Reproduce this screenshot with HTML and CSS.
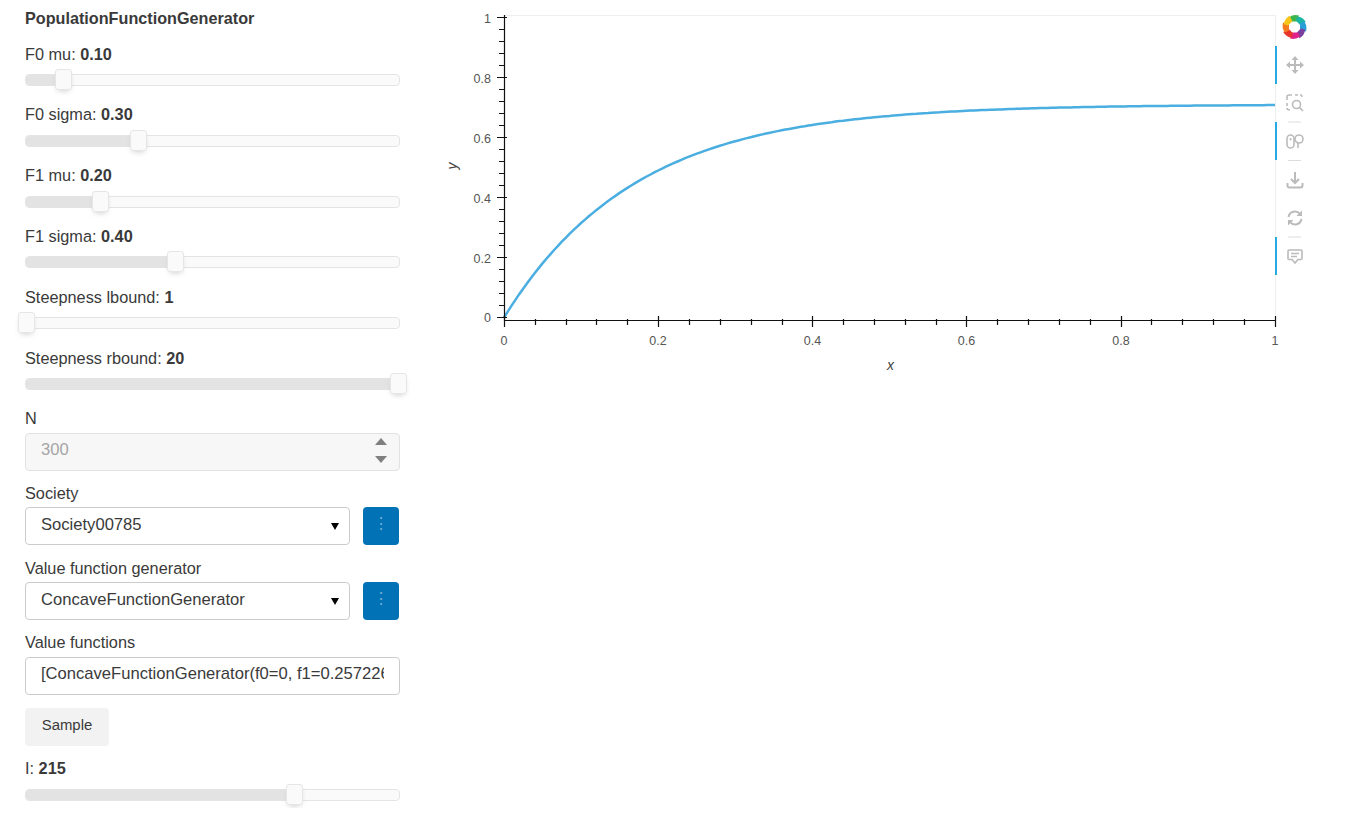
FILE: index.html
```html
<!DOCTYPE html>
<html lang="en">
<head>
    <meta charset="UTF-8">
    <meta name="viewport" content="width=device-width, initial-scale=1.0">
    <title>PopulationFunctionGenerator</title>
    <link rel="stylesheet" href="styles.css">
</head>
<body>
    <div id="container">
        <div id="controls">
            <h1 class="title">PopulationFunctionGenerator</h1>

            <div class="slider">
                <div class="label">F0 mu: <b>0.10</b></div>
                <div class="track" style="--pos: 0.1"><div class="fill"></div><div class="handle"></div></div>
            </div>
            <div class="slider">
                <div class="label">F0 sigma: <b>0.30</b></div>
                <div class="track" style="--pos: 0.3"><div class="fill"></div><div class="handle"></div></div>
            </div>
            <div class="slider">
                <div class="label">F1 mu: <b>0.20</b></div>
                <div class="track" style="--pos: 0.2"><div class="fill"></div><div class="handle"></div></div>
            </div>
            <div class="slider">
                <div class="label">F1 sigma: <b>0.40</b></div>
                <div class="track" style="--pos: 0.4"><div class="fill"></div><div class="handle"></div></div>
            </div>
            <div class="slider">
                <div class="label">Steepness lbound: <b>1</b></div>
                <div class="track" style="--pos: 0"><div class="fill"></div><div class="handle"></div></div>
            </div>
            <div class="slider">
                <div class="label">Steepness rbound: <b>20</b></div>
                <div class="track" style="--pos: 1"><div class="fill"></div><div class="handle"></div></div>
            </div>

            <div class="field">
                <label class="label" for="n">N</label>
                <div class="spinner">
                    <input class="text-input" id="n" type="text" value="300" disabled>
                    <span class="spin-up"></span>
                    <span class="spin-down"></span>
                </div>
            </div>
            <div class="field">
                <label class="label" for="society">Society</label>
                <div class="select-row">
                    <div class="select-box">
                        <select class="text-input" id="society"><option>Society00785</option></select>
                    </div>
                    <button class="menu-button">⋮</button>
                </div>
            </div>
            <div class="field">
                <label class="label" for="generator">Value function generator</label>
                <div class="select-row">
                    <div class="select-box">
                        <select class="text-input" id="generator"><option>ConcaveFunctionGenerator</option></select>
                    </div>
                    <button class="menu-button">⋮</button>
                </div>
            </div>
            <div class="field">
                <label class="label" for="functions">Value functions</label>
                <input class="text-input" id="functions" type="text" value="[ConcaveFunctionGenerator(f0=0, f1=0.2572260000, steepness=4.2)]">
            </div>

            <button class="sample-button">Sample</button>

            <div class="slider last">
                <div class="label">I: <b>215</b></div>
                <div class="track" style="--pos: 0.719"><div class="fill"></div><div class="handle"></div></div>
            </div>
        </div>

        <div id="plot">
            <!-- viewBox uses page coordinates so the numbers read off the screenshot directly -->
            <svg class="chart" viewBox="440 0 880 380" width="880" height="380">
                <path class="frame" d="M504 15.5H1275.5V320"/>

                <path class="tool-active" d="M1276 46V84M1276 122V160M1276 237V275"/>

                <path class="curve" id="curve" d="M504 317.5"/>

                <!-- y axis -->
                <path class="axis" d="M504.5 15V320.5"/>
                <path class="axis" d="M497 17.5H507M497 77.5H507M497 137.5H507M497 197.5H507M497 257.5H507M497 317.5H507"/>
                <path class="axis" d="M499 29.5H504M499 41.5H504M499 53.5H504M499 65.5H504M499 89.5H504M499 101.5H504M499 113.5H504M499 125.5H504M499 149.5H504M499 161.5H504M499 173.5H504M499 185.5H504M499 209.5H504M499 221.5H504M499 233.5H504M499 245.5H504M499 269.5H504M499 281.5H504M499 293.5H504M499 305.5H504"/>
                <text class="tick" x="491" y="22.500" text-anchor="end">1</text>
                <text class="tick" x="491" y="82.500" text-anchor="end">0.8</text>
                <text class="tick" x="491" y="142.500" text-anchor="end">0.6</text>
                <text class="tick" x="491" y="202.500" text-anchor="end">0.4</text>
                <text class="tick" x="491" y="262.500" text-anchor="end">0.2</text>
                <text class="tick" x="491" y="322" text-anchor="end">0</text>
                <text class="axis-label" transform="translate(457 166) rotate(-90)" text-anchor="middle">y</text>

                <!-- x axis -->
                <path class="axis" d="M504 320.500H1276"/>
                <path class="axis" d="M504.500 316V327M658.500 316V327M812.500 316V327M966.500 316V327M1121.500 316V327M1275.500 316V327"/>
                <path class="axis" d="M535.500 319V325M566.500 319V325M596.500 319V325M627.500 319V325M689.500 319V325M720.500 319V325M751.500 319V325M782.500 319V325M843.500 319V325M874.500 319V325M905.500 319V325M936.500 319V325M997.500 319V325M1028.500 319V325M1059.500 319V325M1090.500 319V325M1151.500 319V325M1182.500 319V325M1213.500 319V325M1244.500 319V325"/>
                <text class="tick" x="504" y="344.500" text-anchor="middle">0</text>
                <text class="tick" x="658" y="344.500" text-anchor="middle">0.2</text>
                <text class="tick" x="812.500" y="344.500" text-anchor="middle">0.4</text>
                <text class="tick" x="966.500" y="344.500" text-anchor="middle">0.6</text>
                <text class="tick" x="1121" y="344.500" text-anchor="middle">0.8</text>
                <text class="tick" x="1275" y="344.500" text-anchor="middle">1</text>
                <text class="axis-label" x="890.500" y="369.500" text-anchor="middle">x</text>

                <!-- bokeh logo: eight petals turned round the centre -->
                <g transform="translate(1294.500 27)">
                    <path fill="#3cb54a" d="M-3.500-5.500-5.500-9.500Q-1.500-13 4.500-11.500L2.500-5.500Z"/>
                    <path fill="#1cb5a3" transform="rotate(45)" d="M-3.500-5.500-5.500-9.500Q-1.500-13 4.500-11.500L2.500-5.500Z"/>
                    <path fill="#2a9fd6" transform="rotate(90)" d="M-3.500-5.500-5.500-9.500Q-1.500-13 4.500-11.500L2.500-5.500Z"/>
                    <path fill="#7b3fa0" transform="rotate(135)" d="M-3.500-5.500-5.500-9.500Q-1.500-13 4.500-11.500L2.500-5.500Z"/>
                    <path fill="#e0218a" transform="rotate(180)" d="M-3.500-5.500-5.500-9.500Q-1.500-13 4.500-11.500L2.500-5.500Z"/>
                    <path fill="#e8352c" transform="rotate(225)" d="M-3.500-5.500-5.500-9.500Q-1.500-13 4.500-11.500L2.500-5.500Z"/>
                    <path fill="#f47b20" transform="rotate(270)" d="M-3.500-5.500-5.500-9.500Q-1.500-13 4.500-11.500L2.500-5.500Z"/>
                    <path fill="#f5c518" transform="rotate(315)" d="M-3.500-5.500-5.500-9.500Q-1.500-13 4.500-11.500L2.500-5.500Z"/>
                </g>

                <!-- pan -->
                <g class="tool thick" transform="translate(1295 65)">
                    <path d="M-6 0H6M0-6V6"/>
                    <path class="solid" d="M0-9-3.500-5H3.500ZM0 9-3.500 5H3.500ZM-9 0-5-3.500V3.500ZM9 0 5-3.500V3.500Z"/>
                </g>
                <!-- box zoom -->
                <g class="tool" transform="translate(1295 103)">
                    <path d="M-8-3V-6Q-8-8-6-8H-3M0-8H3M-8 0V3M-8 5Q-8 7-5 7"/>
                    <circle cx="1.500" cy="1.500" r="4"/>
                    <path d="M4.500 4.500 8 8M5-8H6Q7-8 7-6"/>
                </g>
                <!-- wheel zoom -->
                <g class="tool" transform="translate(1295 141)">
                    <rect x="-8" y="-6" width="7" height="13" rx="3.500"/>
                    <path d="M-4.500-3V-0.500"/>
                    <circle cx="4" cy="-2" r="4"/>
                    <path d="M3 2V7"/>
                </g>
                <!-- save -->
                <g class="tool thick" transform="translate(1295 180)">
                    <path d="M0-8V3M-4-1 0 3 4-1M-7.500 3V5.500Q-7.500 7.500-5.500 7.500H5.500Q7.500 7.500 7.500 5.500V3"/>
                </g>
                <!-- reset -->
                <g class="tool thick" transform="translate(1295 218)">
                    <path d="M-6.500-1A6.500 6.500 0 0 1 5-4M6.500 1A6.500 6.500 0 0 1-5 4"/>
                    <path class="solid" d="M7-7.500V-2H1.500ZM-7 7.500V2H-1.500Z"/>
                </g>
                <!-- comment -->
                <g class="tool" transform="translate(1295 256)">
                    <path d="M-6-6H6Q7-6 7-5V2.500Q7 3.500 6 3.500H3L0 7-3 3.500H-6Q-7 3.500-7 2.500V-5Q-7-6-6-6ZM-4-2.500H4M-4 0.500H2"/>
                </g>

                <path class="divider" d="M1288 122H1301M1288 160.500H1301M1288 237H1301"/>
            </svg>
        </div>
    </div>

    <script src="plot.js"></script>
</body>
</html>
```

FILE: styles.css
```css
body {
    font-family: "Liberation Sans", Arial, sans-serif;
    font-size: 16.3px;
    color: #3a3a3a;
    background-color: #fff;
    margin: 0;
    padding: 0;
}

#container {
    display: flex;
    align-items: flex-start;
    padding-left: 25px;
}

#controls {
    width: 375px;
    flex-shrink: 0;
    padding-top: 8px;
}

.title {
    font-size: 16.2px;
    font-weight: bold;
    line-height: 20px;
    margin: 0 0 15.6px 0;
}

.label {
    display: block;
    line-height: 20px;
}

.slider {
    height: 60.8px;
}

.slider.last {
    height: 50px;
}

.track {
    position: relative;
    height: 12px;
    margin-top: 10.4px;
    box-sizing: border-box;
    background-color: #fafafa;
    border: 1px solid #e4e4e4;
    border-radius: 4px;
}

.slider.last .track {
    margin-top: 11px;
}

.fill {
    height: 100%;
    width: calc(var(--pos) * 372.4px + 1px);
    background-color: #e3e3e3;
    border-radius: 3px 0 0 3px;
}

.handle {
    position: absolute;
    top: -6px;
    left: calc(var(--pos) * 372.4px - 8.2px);
    width: 17px;
    height: 21px;
    box-sizing: border-box;
    background-color: #fafafa;
    border: 1px solid #e6e6e6;
    border-radius: 3px;
    box-shadow: 0 3px 6px -3px #bbb;
}

.field {
    height: 74.67px;
}

.field .label {
    margin-bottom: 4.3px;
}

.text-input {
    display: block;
    width: 100%;
    height: 38px;
    box-sizing: border-box;
    padding: 0 15px 3px 15px;
    font-family: inherit;
    font-size: 16.6px;
    color: #3a3a3a;
    background-color: #fff;
    border: 1px solid #ccc;
    border-radius: 4px;
    outline: none;
}

.text-input:disabled {
    color: #a5a5a5;
    background-color: #f7f7f7;
    border-color: #e2e2e2;
}

select.text-input {
    appearance: none;
}

.spinner {
    position: relative;
}

.spin-up, .spin-down {
    position: absolute;
    right: 13px;
    width: 0;
    height: 0;
    border-left: 6px solid transparent;
    border-right: 6px solid transparent;
}

.spin-up {
    top: 5px;
    border-bottom: 7px solid #808080;
}

.spin-down {
    top: 23px;
    border-top: 7px solid #808080;
}

.select-row {
    display: flex;
    justify-content: space-between;
    padding-right: 1px;
}

.select-box {
    position: relative;
    width: 325px;
}

.select-box::after {
    content: "";
    position: absolute;
    top: 16px;
    right: 11px;
    width: 0;
    height: 0;
    border-left: 4.5px solid transparent;
    border-right: 4.5px solid transparent;
    border-top: 7px solid #000;
}

.menu-button {
    width: 36px;
    height: 38px;
    padding: 0 0 5px 0;
    font-family: inherit;
    font-size: 16px;
    color: #6fb0d8;
    background-color: #0072b5;
    border: none;
    border-radius: 4px;
}

.sample-button {
    display: block;
    width: 84px;
    height: 38px;
    margin-top: 1px;
    margin-bottom: 12px;
    padding: 0 0 4px 0;
    font-family: inherit;
    font-size: 14.9px;
    color: #3a3a3a;
    background-color: #f2f2f2;
    border: none;
    border-radius: 4px;
}

#plot {
    margin-left: 40px;
}

.chart {
    display: block;
}

.frame {
    fill: none;
    stroke: #eee;
    stroke-width: 1;
}

.tool-active {
    fill: none;
    stroke: #26aae1;
    stroke-width: 2;
}

.curve {
    fill: none;
    stroke: #4aaee0;
    stroke-width: 2.5;
}

.axis {
    fill: none;
    stroke: #111;
    stroke-width: 1.2;
}

.tick {
    font-size: 12.5px;
    fill: #555;
}

.axis-label {
    font-size: 14px;
    font-style: italic;
    fill: #444;
}

.tool {
    fill: none;
    stroke: #bbb;
    stroke-width: 1.6;
}

.tool.thick {
    stroke-width: 2;
}

.tool .solid {
    fill: #bbb;
    stroke: none;
}

.divider {
    fill: none;
    stroke: #ddd;
    stroke-width: 1;
}
```

FILE: plot.js
```js
// Concave value function: y = a * (1 - exp(-k * x)), drawn on the page-coordinate svg
const a = 0.71;
const k = 5.86;

let d = "";
for (let i = 0; i <= 200; i++) {
    const x = i / 200;
    const y = a * (1 - Math.exp(-k * x));
    const px = 504 + x * 771;
    const py = 317.5 - y * 300;
    d += (i === 0 ? "M" : "L") + px.toFixed(1) + " " + py.toFixed(1);
}
document.getElementById("curve").setAttribute("d", d);
```
